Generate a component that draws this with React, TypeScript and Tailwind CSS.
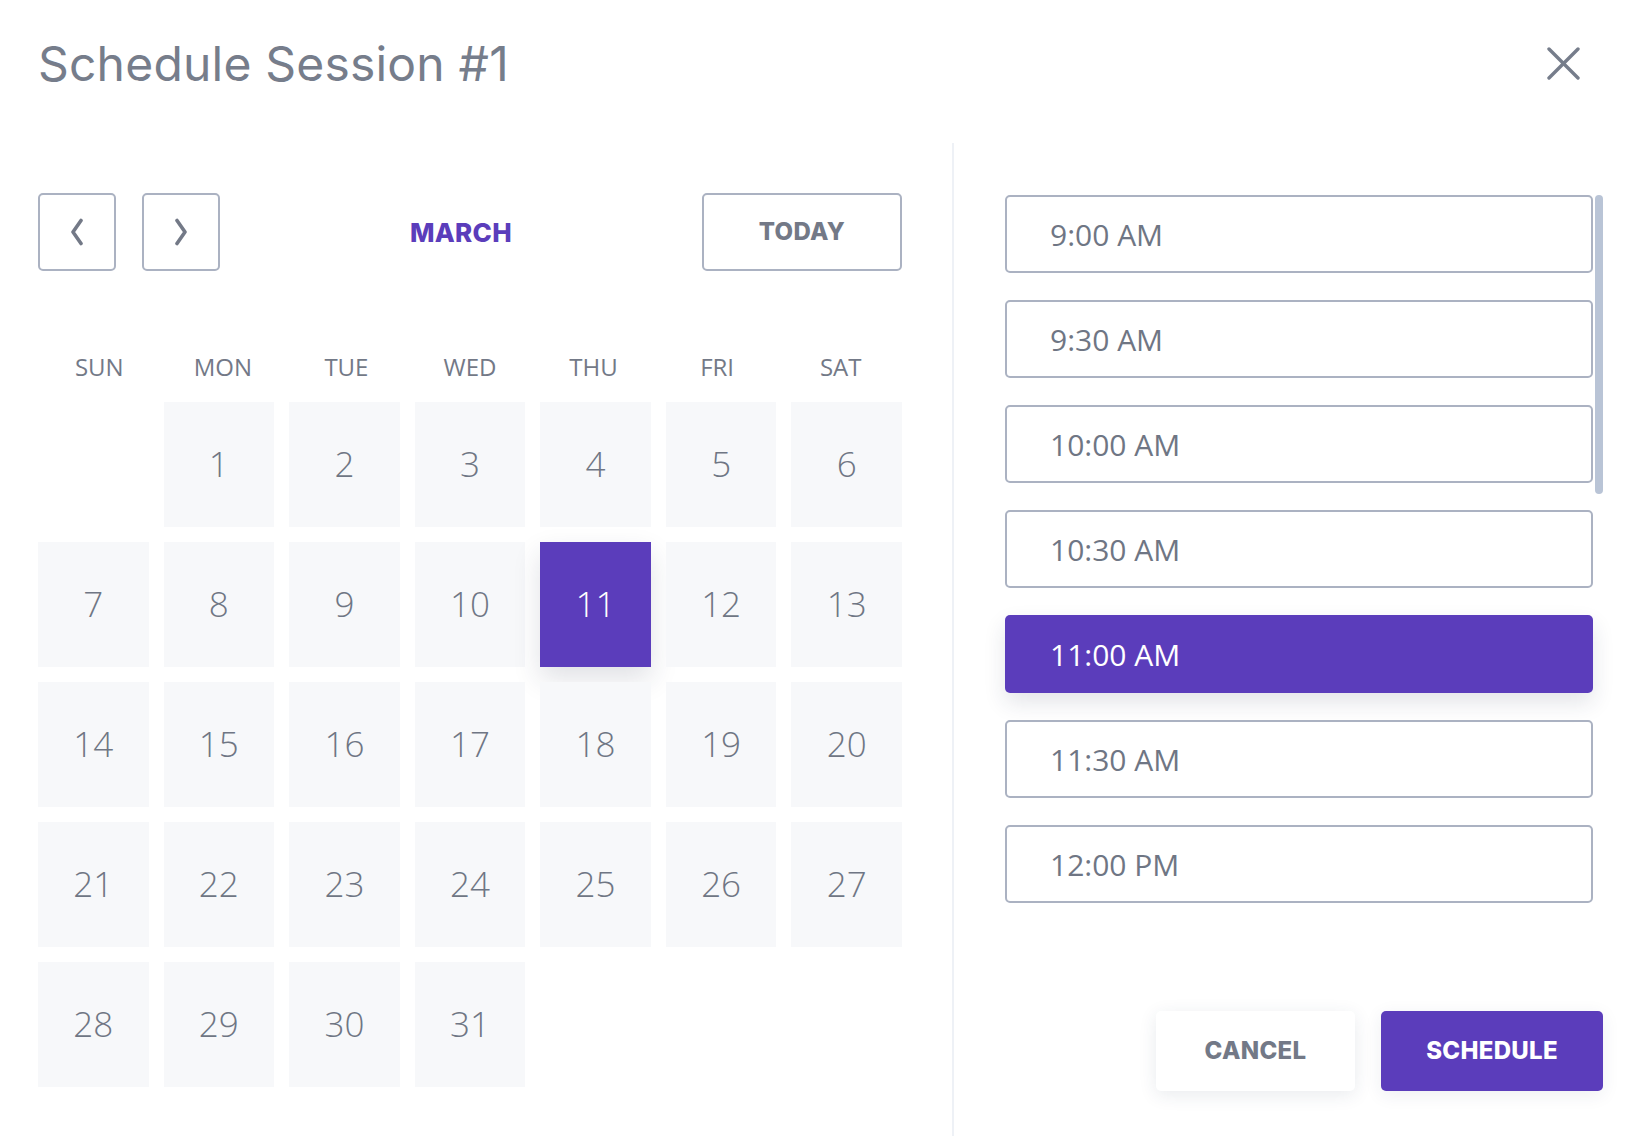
import React from "react";

const DAYS = ["SUN", "MON", "TUE", "WED", "THU", "FRI", "SAT"];
const SLOTS = ["9:00 AM", "9:30 AM", "10:00 AM", "10:30 AM", "11:00 AM", "11:30 AM", "12:00 PM"];

export default function App() {
  // March starts on a Monday: one blank cell first
  const cells: (number | null)[] = [null, ...Array.from({ length: 31 }, (_, i) => i + 1)];
  const selectedDay = 11;
  const selectedSlot = "11:00 AM";

  return (
    <div className="h-[1147px] w-[1638px] overflow-hidden bg-white font-['Open_Sans',sans-serif] text-[#737a88]">
      <header className="flex h-[143px] items-start justify-between pl-[38px] pr-[58px] pt-[40px]">
        <h1 className="font-['Inter',sans-serif] text-[48px] font-normal leading-none tracking-[0.2px] text-[#767d8b]">
          Schedule Session #1
        </h1>
        <button type="button" className="mt-[7px] text-[#767d8b]" aria-label="Close">
          <svg width="33" height="33" viewBox="0 0 33 33" fill="none" stroke="currentColor" strokeWidth="3.4" strokeLinecap="round">
            <line x1="2" y1="2" x2="31" y2="31" />
            <line x1="31" y1="2" x2="2" y2="31" />
          </svg>
        </button>
      </header>

      <main className="flex h-[993px] pl-[38px] pr-[35px]">
        <section className="w-[864px] pt-[50px]">
          <div className="flex h-[78px] items-center">
            <NavButton dir="left" />
            <div className="ml-[26px]">
              <NavButton dir="right" />
            </div>
            <div className="flex-1 text-center font-['Inter',sans-serif] text-[26px] font-extrabold tracking-[0.3px] text-[#5b3dbb]">
              MARCH
            </div>
            <button
              type="button"
              className="h-[78px] w-[200px] rounded-[5px] border-2 border-[#abb2c2] font-['Inter',sans-serif] text-[24px] font-extrabold tracking-[0.3px] text-[#737987]"
            >
              TODAY
            </button>
          </div>

          <div className="mt-[76px] grid h-[40px] grid-cols-7 gap-x-[15px] px-[7px]">
            {DAYS.map((d) => (
              <div key={d} className="flex items-center justify-center text-[24px] font-medium text-[#737987]">
                {d}
              </div>
            ))}
          </div>

          <div className="mt-[15px] grid grid-cols-7 auto-rows-[125px] gap-[15px]">
            {cells.map((day, i) =>
              day === null ? (
                <div key={`blank-${i}`} />
              ) : day === selectedDay ? (
                <div
                  key={day}
                  className="flex items-center justify-center bg-[#5b3dbb] text-[35px] font-light text-white shadow-[0_12px_26px_rgba(35,45,70,0.14)]"
                >
                  {day}
                </div>
              ) : (
                <div key={day} className="flex items-center justify-center bg-[#f7f8fa] text-[35px] font-light text-[#6f7684]">
                  {day}
                </div>
              )
            )}
          </div>
        </section>

        <div className="ml-[50px] w-[2px] bg-[#eef1f6]" />

        <section className="ml-[51px] flex flex-1 flex-col pt-[52px]">
          <div className="flex h-[708px] gap-[2px]">
            <div className="flex w-[588px] flex-col gap-[27px]">
              {SLOTS.map((s) =>
                s === selectedSlot ? (
                  <div
                    key={s}
                    className="flex h-[78px] shrink-0 items-center rounded-[5px] bg-[#5b3dbb] pl-[45px] text-[30px] text-white shadow-[0_10px_22px_rgba(35,45,70,0.12)]"
                  >
                    {s}
                  </div>
                ) : (
                  <div
                    key={s}
                    className="flex h-[78px] shrink-0 items-center rounded-[5px] border-2 border-[#abb2c2] pl-[43px] text-[30px] text-[#6f7684]"
                  >
                    {s}
                  </div>
                )
              )}
            </div>
            {/* scrollbar */}
            <div className="w-[8px]">
              <div className="h-[299px] rounded-full bg-[#b9c4d6]" />
            </div>
          </div>

          <div className="mt-[108px] flex justify-end gap-[26px] font-['Inter',sans-serif] text-[24px] font-extrabold tracking-[0.3px]">
            <button
              type="button"
              className="h-[80px] w-[199px] rounded-[5px] bg-white text-[#737987] shadow-[0_4px_18px_rgba(40,55,90,0.10)]"
            >
              CANCEL
            </button>
            <button type="button" className="h-[80px] w-[222px] rounded-[5px] bg-[#5b3dbb] text-white shadow-[0_4px_18px_rgba(40,55,90,0.08)]">
              SCHEDULE
            </button>
          </div>
        </section>
      </main>
    </div>
  );
}

function NavButton({ dir }: { dir: "left" | "right" }) {
  return (
    <button
      type="button"
      className="flex h-[78px] w-[78px] items-center justify-center rounded-[5px] border-2 border-[#abb2c2] text-[#737987]"
    >
      <svg width="16" height="28" viewBox="0 0 16 28" fill="none" stroke="currentColor" strokeWidth="3.6" strokeLinecap="round" strokeLinejoin="round">
        {dir === "left" ? <path d="M12 2.5 L4 14 L12 25.5" /> : <path d="M4 2.5 L12 14 L4 25.5" />}
      </svg>
    </button>
  );
}
